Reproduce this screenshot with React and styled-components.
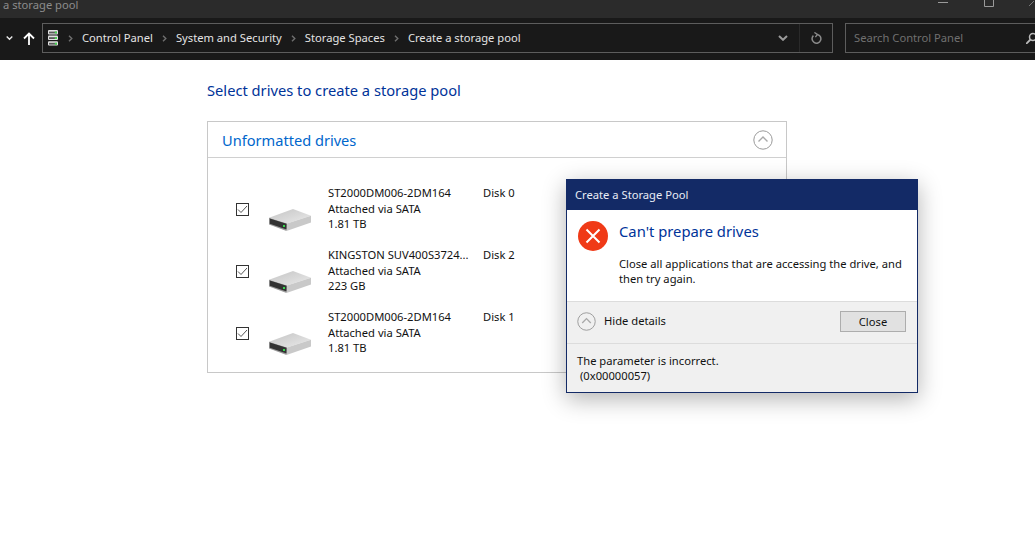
import { Fragment } from "react";
import styled, { createGlobalStyle } from "styled-components";

const GlobalStyle = createGlobalStyle`
  html, body {
    margin: 0;
    padding: 0;
    background: #fff;
    overflow: hidden;
  }
  * { box-sizing: border-box; }
`;

const FONT = `"Noto Sans", "Open Sans", sans-serif`;

const Page = styled.div`
  position: relative;
  width: 1035px;
  height: 560px;
  overflow: hidden;
  background: #fff;
  font-family: ${FONT};
  font-size: 11.2px;
  color: #111;
`;

const TitleBar = styled.div`
  height: 18px;
  background: #2b2b2b;
  display: flex;
  justify-content: space-between;
  overflow: hidden;
`;

const WindowTitle = styled.div`
  color: #8c8c8c;
  font-size: 11.2px;
  line-height: 9px;
  padding-left: 3px;
`;

const WindowControls = styled.div`
  display: flex;
  align-items: flex-start;
  width: 103px;
  height: 8px;
  overflow: hidden;
`;

const NavBar = styled.div`
  height: 42px;
  background: #191919;
  display: flex;
  align-items: flex-start;
  padding-top: 5px;
`;

const NavButtons = styled.div`
  width: 42px;
  height: 30px;
  display: flex;
  align-items: center;
  gap: 10px;
  padding-left: 6px;
`;

const AddressBox = styled.div`
  width: 791px;
  height: 30px;
  border: 1px solid #5d5d5d;
  display: flex;
  align-items: center;
  padding-left: 5px;
  margin-right: 12px;
`;

const Crumbs = styled.div`
  flex: 1;
  display: flex;
  align-items: center;
  padding-left: 1px;
  color: #e4e4e4;
`;

const Crumb = styled.span`
  white-space: nowrap;
  padding-bottom: 2px;
`;

const CrumbArrow = styled.span`
  width: 23px;
  display: flex;
  justify-content: center;
`;

const AddressTools = styled.div`
  height: 100%;
  display: flex;
  align-items: center;
`;

const ToolButton = styled.div`
  width: 33px;
  height: 100%;
  display: flex;
  align-items: center;
  justify-content: center;
  border-left: 1px solid ${(p) => (p.$divided ? "#2a2a2a" : "transparent")};
`;

const SearchBox = styled.div`
  flex: 1;
  height: 30px;
  border: 1px solid #5d5d5d;
  border-right: none;
  display: flex;
  align-items: center;
  justify-content: space-between;
  padding-left: 8px;
  color: #707070;
`;

const SearchHint = styled.span`
  padding-bottom: 2px;
`;

const Content = styled.main`
  padding: 20px 0 0 207px;
  width: 787px;
`;

const Heading = styled.h1`
  margin: 0 0 21px;
  font-size: 14.7px;
  line-height: 20px;
  font-weight: 400;
  color: #003399;
`;

const Card = styled.section`
  border: 1px solid #c8c8c8;
  height: 252px;
`;

const CardHeader = styled.div`
  height: 36px;
  border-bottom: 1px solid #d0d0d0;
  display: flex;
  align-items: center;
  justify-content: space-between;
  padding: 0 13px 0 14px;
  color: #0066cc;
  font-size: 14.6px;
`;

const DriveList = styled.div`
  padding: 28px 0 0 28px;
  display: flex;
  flex-direction: column;
  gap: 17px;
`;

const DriveRow = styled.div`
  display: flex;
  align-items: flex-start;
  height: 45px;
`;

const CheckBox = styled.span`
  width: 13px;
  height: 13px;
  margin-top: 17px;
  border: 1px solid #333;
  display: flex;
  align-items: center;
  justify-content: center;
  flex-shrink: 0;
`;

const DriveIcon = styled.span`
  margin-left: 20px;
  margin-top: 23px;
  width: 42px;
  height: 22px;
  flex-shrink: 0;
`;

const DriveInfo = styled.div`
  margin-left: 17px;
  width: 155px;
  line-height: 15.5px;
  margin-top: -1px;
`;

const DiskLabel = styled.div`
  line-height: 15.5px;
  margin-top: -1px;
`;

const Dialog = styled.div`
  position: absolute;
  left: 566px;
  top: 179px;
  width: 352px;
  height: 214px;
  border: 1px solid #132a66;
  background: #f0f0f0;
  box-shadow: 0 6px 22px rgba(0, 0, 0, 0.3);
  display: flex;
  flex-direction: column;
`;

const DialogTitle = styled.div`
  height: 30px;
  background: #132a66;
  color: #e8ecf5;
  display: flex;
  align-items: center;
  padding: 0 0 2px 8px;
`;

const DialogBody = styled.div`
  height: 92px;
  background: #fff;
  display: flex;
  border-bottom: 1px solid #dcdcdc;
  padding: 11px 0 0 11px;
`;

const ErrorIcon = styled.span`
  width: 30px;
  height: 30px;
  flex-shrink: 0;
`;

const DialogText = styled.div`
  margin-left: 11px;
  width: 300px;
`;

const DialogHeading = styled.div`
  font-size: 14.8px;
  line-height: 22px;
  color: #003399;
  margin: -1px 0 14px;
`;

const DialogMessage = styled.div`
  line-height: 15px;
`;

const DialogActions = styled.div`
  height: 42px;
  border-bottom: 1px solid #dcdcdc;
  display: flex;
  align-items: center;
  justify-content: space-between;
  padding: 0 11px 2px 10px;
`;

const DetailsToggle = styled.div`
  display: flex;
  align-items: center;
  gap: 8px;
`;

const ToggleLabel = styled.span`
  padding-bottom: 2px;
`;

const CloseButton = styled.button`
  width: 66px;
  height: 21px;
  border: 1px solid #adadad;
  background: #e1e1e1;
  font-family: ${FONT};
  font-size: 11.2px;
  color: #111;
  padding: 0;
`;

const DialogDetails = styled.div`
  padding: 9px 10px 0;
  line-height: 15px;
`;

const DetailCode = styled.div`
  padding-left: 3px;
`;

const Collapse = ({ size }) => (
  <svg width={size} height={size} viewBox="0 0 20 20" fill="none">
    <circle cx="10" cy="10" r="9.2" stroke="#9a9a9a" strokeWidth="1" />
    <path d="M5.5 11.5 10 7l4.5 4.5" stroke="#a8a8a8" strokeWidth="1.4" />
  </svg>
);

const Chevron = ({ color, width }) => (
  <svg width={width} height="6" viewBox="0 0 10 6" fill="none">
    <path d="M1 1l4 3.8L9 1" stroke={color} strokeWidth="2" />
  </svg>
);

const SmallArrow = () => (
  <svg width="5" height="7" viewBox="0 0 5 7" fill="none">
    <path d="M1 .8 3.8 3.5 1 6.2" stroke="#6f6f6f" strokeWidth="1.4" />
  </svg>
);

const PoolUnit = ({ y }) => (
  <g>
    <rect x="0" y={y} width="10" height="4.4" rx="1" fill="#e2e2e2" />
    <rect x="1" y={y + 1.6} width="8" height="1.8" fill="#5a5a5a" />
    <rect x="6.8" y={y + 1.6} width="2.2" height="1.8" fill="#45d84f" />
  </g>
);

const PoolIcon = () => (
  <svg width="10" height="16" viewBox="0 0 10 16">
    <PoolUnit y={0} />
    <PoolUnit y={5.6} />
    <PoolUnit y={11.2} />
  </svg>
);

const Drive = () => (
  <svg width="42" height="22" viewBox="0 0 42 22">
    <defs>
      <linearGradient id="driveTop" x1="0" y1="0" x2="1" y2="1">
        <stop offset="0" stopColor="#c4c4c4" />
        <stop offset="1" stopColor="#eaeaea" />
      </linearGradient>
    </defs>
    <path d="M0 8.7 24 0l18 6.7L18 14.5z" fill="url(#driveTop)" />
    <path d="M18 14.5 42 6.7v6.8L17.5 22z" fill="#c9c9c9" />
    <path d="M0 8.7 18 14.5 17.5 22 0 15.5z" fill="#9a9a9a" />
    <path d="M.8 9.4 17.5 14.8v5.6L.8 14.8z" fill="#333" />
    <rect x="14" y="16" width="2" height="2" fill="#38d84e" />
  </svg>
);

const drives = [
  { name: "ST2000DM006-2DM164", size: "1.81 TB", disk: "Disk 0" },
  { name: "KINGSTON SUV400S3724...", size: "223 GB", disk: "Disk 2" },
  { name: "ST2000DM006-2DM164", size: "1.81 TB", disk: "Disk 1" },
];

const crumbs = ["Control Panel", "System and Security", "Storage Spaces", "Create a storage pool"];

export default function App() {
  return (
    <Page>
      <GlobalStyle />
      <TitleBar>
        <WindowTitle>a storage pool</WindowTitle>
        <WindowControls>
          <svg width="103" height="8" viewBox="0 0 103 8" fill="none">
            <path d="M6 2.5h10" stroke="#9a9a9a" />
            <path d="M52.5 0v6.5h9V0" stroke="#9a9a9a" />
            <path d="M97 6l5-5" stroke="#777" />
          </svg>
        </WindowControls>
      </TitleBar>
      <NavBar>
        <NavButtons>
          <Chevron color="#e8e8e8" width={7} />
          <svg width="12" height="13" viewBox="0 0 12 13" fill="none">
            <path d="M6 13V2M1 6.5 6 1.5l5 5" stroke="#fff" strokeWidth="1.8" />
          </svg>
        </NavButtons>
        <AddressBox>
          <PoolIcon />
          <Crumbs>
            {crumbs.map((c) => (
              <Fragment key={c}>
                <CrumbArrow><SmallArrow /></CrumbArrow>
                <Crumb>{c}</Crumb>
              </Fragment>
            ))}
          </Crumbs>
          <AddressTools>
            <ToolButton>
              <Chevron color="#9a9a9a" width={10} />
            </ToolButton>
            <ToolButton $divided>
              <svg width="11" height="12" viewBox="0 0 11 12" fill="none">
                <path d="M6 2.4A4.4 4.4 0 1 1 2.4 3.6" stroke="#8a8a8a" strokeWidth="1.5" />
                <path d="M3.4.4 6.4 2.4 4.4 5.2" stroke="#8a8a8a" strokeWidth="1.3" />
              </svg>
            </ToolButton>
          </AddressTools>
        </AddressBox>
        <SearchBox>
          <SearchHint>Search Control Panel</SearchHint>
          <svg width="9" height="12" viewBox="0 0 9 12" fill="none">
            <circle cx="7" cy="5" r="3.5" stroke="#bbb" strokeWidth="1.5" />
            <path d="M4.5 7.5 0 12" stroke="#bbb" strokeWidth="1.8" />
          </svg>
        </SearchBox>
      </NavBar>
      <Content>
        <Heading>Select drives to create a storage pool</Heading>
        <Card>
          <CardHeader>
            <span>Unformatted drives</span>
            <Collapse size={20} />
          </CardHeader>
          <DriveList>
            {drives.map((d) => (
              <DriveRow key={d.disk}>
                <CheckBox>
                  <svg width="11" height="9" viewBox="0 0 11 9" fill="none">
                    <path d="M1 4.5 4 7.5 10 1" stroke="#555" strokeWidth="1" />
                  </svg>
                </CheckBox>
                <DriveIcon><Drive /></DriveIcon>
                <DriveInfo>
                  <div>{d.name}</div>
                  <div>Attached via SATA</div>
                  <div>{d.size}</div>
                </DriveInfo>
                <DiskLabel>{d.disk}</DiskLabel>
              </DriveRow>
            ))}
          </DriveList>
        </Card>
      </Content>
      <Dialog>
        <DialogTitle>Create a Storage Pool</DialogTitle>
        <DialogBody>
          <ErrorIcon>
            <svg width="30" height="30" viewBox="0 0 30 30">
              <circle cx="15" cy="15" r="15" fill="#f03a17" />
              <path d="M8.5 8.5l13 13M21.5 8.5l-13 13" stroke="#fff" strokeWidth="2" />
            </svg>
          </ErrorIcon>
          <DialogText>
            <DialogHeading>Can't prepare drives</DialogHeading>
            <DialogMessage>
              Close all applications that are accessing the drive, and then try again.
            </DialogMessage>
          </DialogText>
        </DialogBody>
        <DialogActions>
          <DetailsToggle>
            <Collapse size={19} />
            <ToggleLabel>Hide details</ToggleLabel>
          </DetailsToggle>
          <CloseButton>Close</CloseButton>
        </DialogActions>
        <DialogDetails>
          The parameter is incorrect.
          <DetailCode>(0x00000057)</DetailCode>
        </DialogDetails>
      </Dialog>
    </Page>
  );
}
